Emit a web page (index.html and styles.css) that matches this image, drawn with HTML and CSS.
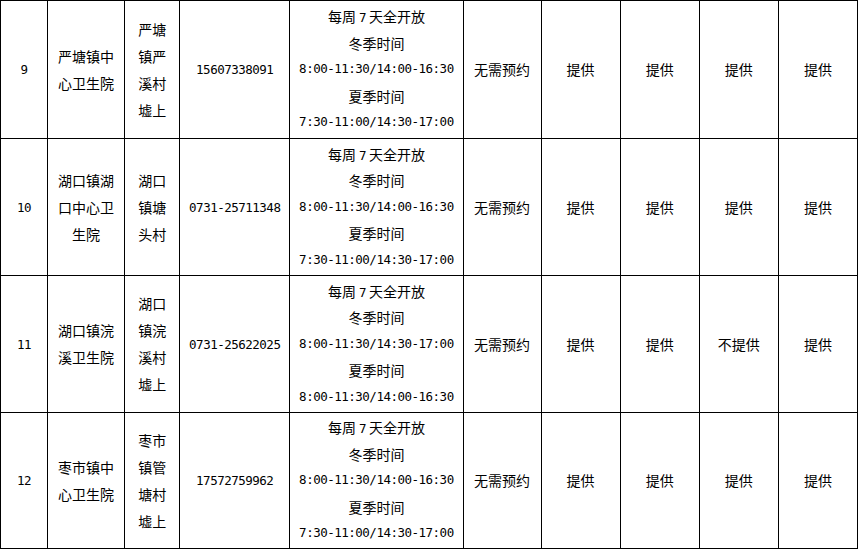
FILE: index.html
```html
<!DOCTYPE html>
<html lang="zh-CN">
<head>
<meta charset="utf-8">
<title>卫生院信息表</title>
<link rel="stylesheet" href="styles.css">
</head>
<body>
<table class="grid">
  <colgroup>
    <col class="c-no"><col class="c-name"><col class="c-addr"><col class="c-tel"><col class="c-hours"><col class="c-res"><col class="c-svc"><col class="c-svc"><col class="c-svc"><col class="c-svc">
  </colgroup>
  <tbody>
    <tr class="r1">
      <td class="num">9</td>
      <td>严塘镇中<br>心卫生院</td>
      <td>严塘<br>镇严<br>溪村<br>墟上</td>
      <td class="num">15607338091</td>
      <td class="hours"><div>每周<span class="num d7">7</span>天全开放</div><div>冬季时间</div><div class="num">8:00-11:30/14:00-16:30</div><div>夏季时间</div><div class="num">7:30-11:00/14:30-17:00</div></td>
      <td>无需预约</td>
      <td>提供</td><td>提供</td><td>提供</td><td>提供</td>
    </tr>
    <tr class="r2">
      <td class="num">10</td>
      <td>湖口镇湖<br>口中心卫<br>生院</td>
      <td>湖口<br>镇塘<br>头村</td>
      <td class="num">0731-25711348</td>
      <td class="hours"><div>每周<span class="num d7">7</span>天全开放</div><div>冬季时间</div><div class="num">8:00-11:30/14:00-16:30</div><div>夏季时间</div><div class="num">7:30-11:00/14:30-17:00</div></td>
      <td>无需预约</td>
      <td>提供</td><td>提供</td><td>提供</td><td>提供</td>
    </tr>
    <tr class="r3">
      <td class="num">11</td>
      <td>湖口镇浣<br>溪卫生院</td>
      <td>湖口<br>镇浣<br>溪村<br>墟上</td>
      <td class="num">0731-25622025</td>
      <td class="hours"><div>每周<span class="num d7">7</span>天全开放</div><div>冬季时间</div><div class="num">8:00-11:30/14:30-17:00</div><div>夏季时间</div><div class="num">8:00-11:30/14:00-16:30</div></td>
      <td>无需预约</td>
      <td>提供</td><td>提供</td><td>不提供</td><td>提供</td>
    </tr>
    <tr class="r4">
      <td class="num">12</td>
      <td>枣市镇中<br>心卫生院</td>
      <td>枣市<br>镇管<br>塘村<br>墟上</td>
      <td class="num">17572759962</td>
      <td class="hours"><div>每周<span class="num d7">7</span>天全开放</div><div>冬季时间</div><div class="num">8:00-11:30/14:00-16:30</div><div>夏季时间</div><div class="num">7:30-11:00/14:30-17:00</div></td>
      <td>无需预约</td>
      <td>提供</td><td>提供</td><td>提供</td><td>提供</td>
    </tr>
  </tbody>
</table>
</body>
</html>
```
FILE: styles.css
```css
html, body {
  margin: 0;
  padding: 0;
  background: #ffffff;
}
body {
  font-family: "Noto Sans CJK SC", "Noto Sans CJK JP", sans-serif;
  font-size: 14px;
  color: #000000;
}
.grid {
  border-collapse: collapse;
  table-layout: fixed;
  width: 858px;
}
.grid td {
  border: 1px solid #000000;
  padding: 0 2px;
  text-align: center;
  vertical-align: middle;
  line-height: 27px;
  overflow: hidden;
}
.c-no { width: 47px; }
.c-name { width: 77px; }
.c-addr { width: 55px; }
.c-tel { width: 110px; }
.c-hours { width: 173px; }
.c-res { width: 78px; }
.c-svc { width: 79px; }
.r1 td { height: 137px; }
.r2 td { height: 136px; }
.r3 td { height: 136px; }
.r4 td { height: 135px; }
.num {
  font-family: "DejaVu Sans Mono", "Liberation Mono", monospace;
  font-size: 12.5px;
  letter-spacing: -0.5px;
}
.grid td.hours {
  padding: 0;
}
.hours div {
  height: 26.6px;
  line-height: 26.6px;
  overflow: hidden;
}
.d7 {
  line-height: 1;
  margin: 0 3px 0 3px;
}
```
